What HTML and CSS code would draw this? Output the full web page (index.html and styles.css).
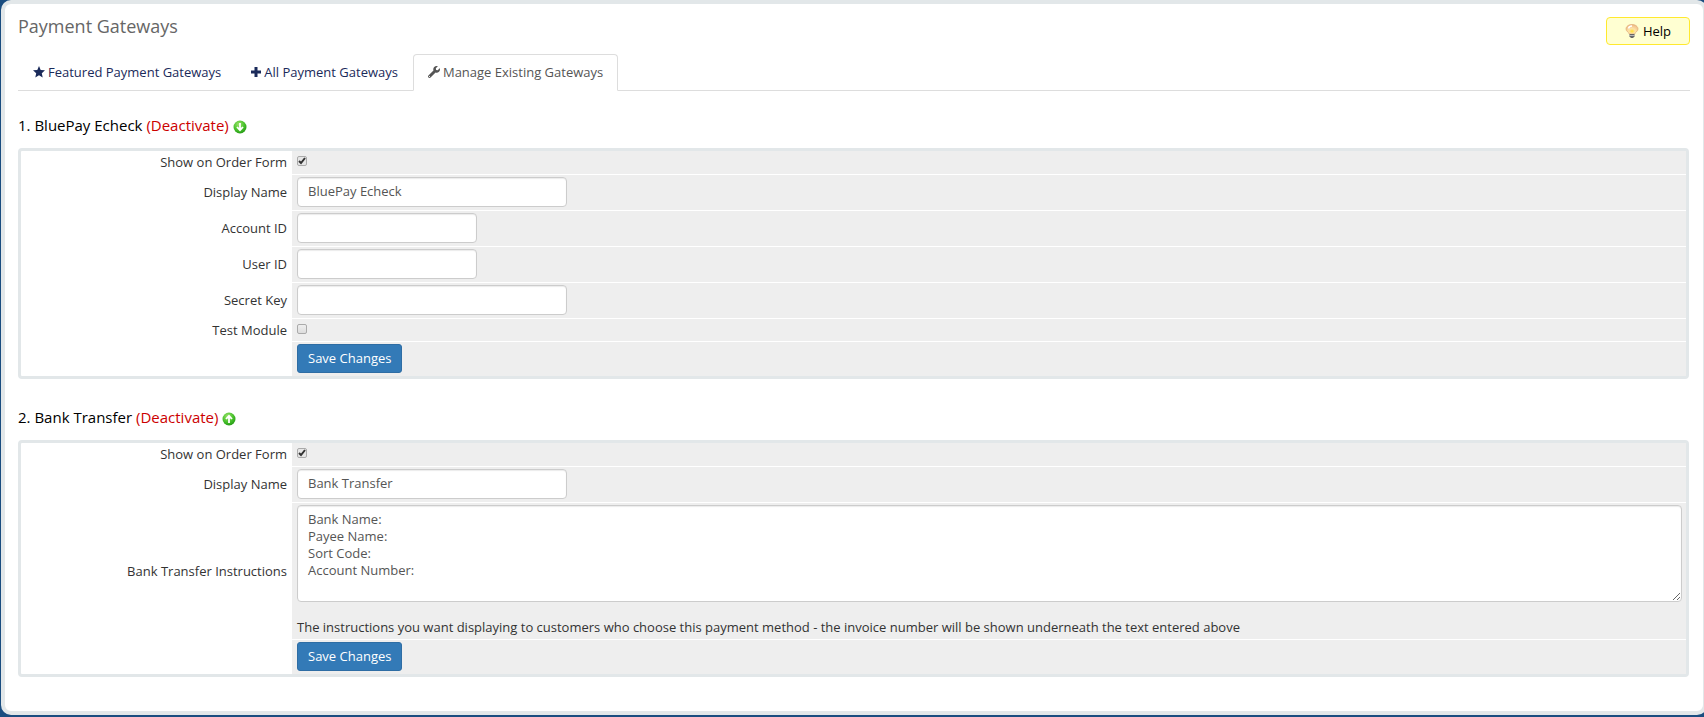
FILE: index.html
```
<!DOCTYPE html>
<html lang="en">
<head>
    <meta charset="UTF-8">
    <meta name="viewport" content="width=device-width, initial-scale=1.0">
    <title>Payment Gateways</title>
    <link rel="stylesheet" href="styles.css">
</head>
<body>
<svg class="defs" width="0" height="0" aria-hidden="true">
    <defs>
        <radialGradient id="green" cx="40%" cy="30%" r="75%">
            <stop offset="0" stop-color="#9be46a"/>
            <stop offset="0.6" stop-color="#45bf2a"/>
            <stop offset="1" stop-color="#219512"/>
        </radialGradient>
        <radialGradient id="glow" cx="50%" cy="70%" r="65%">
            <stop offset="0" stop-color="#ffdf2e"/>
            <stop offset="0.4" stop-color="#fde3a8"/>
            <stop offset="1" stop-color="#f0bc88"/>
        </radialGradient>
    </defs>
</svg>
<main class="panel">
    <div class="header">
        <h1>Payment Gateways</h1>
        <button type="button" class="btn-help">
            <svg width="14" height="14" viewBox="0 0 14 14">
                <path d="M7 .5C3.500 .5 1 2.600 1 5c0 2.500 2.800 3 3.300 5h5.400C10.200 8 13 7.500 13 5c0-2.400-2.500-4.500-6-4.500z" fill="url(#glow)" stroke="#e0ac78" stroke-width=".7"/>
                <path d="M3.500 4.500C3.800 3 5 2 7 2" fill="none" stroke="#fff" stroke-width="1.500"/>
                <path d="M4.500 10h5v2.500l-1.500 1.500H6l-1.500-1.500z" fill="#666"/>
                <path d="M4.500 11.500h5" stroke="#ccc" stroke-width=".8"/>
            </svg>
            Help
        </button>
    </div>

    <nav class="tabs">
        <a href="#featured">
            <svg width="12" height="12" viewBox="0 0 12 12"><path d="M6 0l1.700 3.900 4.300.4-3.200 2.900.9 4.300L6 9.300l-3.700 2.200.9-4.300L0 4.300l4.300-.4z" fill="currentColor"/></svg>
            Featured Payment Gateways
        </a>
        <a href="#all">
            <svg width="10" height="12" viewBox="0 0 10 12"><path d="M3.500 1h3v3.500H10v3H6.500V11h-3V7.500H0v-3h3.500z" fill="currentColor"/></svg>
            All Payment Gateways
        </a>
        <a href="#manage" class="active">
            <svg width="12" height="12" viewBox="0 0 512 512"><path d="M507.700 109.100c-2.200-9-13.500-12.100-20.100-5.500l-74.400 74.400-67.900-11.300L334 98.900l74.400-74.400c6.600-6.600 3.400-17.900-5.700-20.200-47.400-11.700-99.600.9-136.600 37.900-39.600 39.600-50.500 97.100-34 147.200L18.700 402.800c-25 25-25 65.500 0 90.500s65.500 25 90.500 0l213.200-213.200c50.100 16.700 107.500 5.700 147.400-34.200 37.100-37.100 49.700-89.300 37.900-136.800zM64 472a24 24 0 1 1 0-48 24 24 0 0 1 0 48z" fill="currentColor"/></svg>
            Manage Existing Gateways
        </a>
    </nav>

    <section>
        <h2>1. BluePay Echeck <a href="#deactivate-1">(Deactivate)</a>
            <a href="#down" aria-label="Move down"><svg width="14" height="14" viewBox="0 0 14 14"><circle cx="7" cy="7" r="6.500" fill="url(#green)"/><path d="M7 3v7M4 7l3 3.200L10 7" fill="none" stroke="#fff" stroke-width="1.800"/></svg></a>
        </h2>
        <form>
            <table class="form">
                <tr>
                    <th><label for="show1">Show on Order Form</label></th>
                    <td><input type="checkbox" id="show1" checked></td>
                </tr>
                <tr>
                    <th><label for="name1">Display Name</label></th>
                    <td><input type="text" id="name1" value="BluePay Echeck"></td>
                </tr>
                <tr>
                    <th><label for="account">Account ID</label></th>
                    <td><input type="text" id="account" class="short"></td>
                </tr>
                <tr>
                    <th><label for="user">User ID</label></th>
                    <td><input type="text" id="user" class="short"></td>
                </tr>
                <tr>
                    <th><label for="secret">Secret Key</label></th>
                    <td><input type="text" id="secret"></td>
                </tr>
                <tr>
                    <th><label for="test">Test Module</label></th>
                    <td class="low"><input type="checkbox" id="test"></td>
                </tr>
                <tr>
                    <th></th>
                    <td><button type="submit" class="btn-save">Save Changes</button></td>
                </tr>
            </table>
        </form>
    </section>

    <section>
        <h2>2. Bank Transfer <a href="#deactivate-2">(Deactivate)</a>
            <a href="#up" aria-label="Move up"><svg width="14" height="14" viewBox="0 0 14 14"><circle cx="7" cy="7" r="6.500" fill="url(#green)"/><path d="M7 11V4M4 7l3-3.200L10 7" fill="none" stroke="#fff" stroke-width="1.800"/></svg></a>
        </h2>
        <form>
            <table class="form">
                <tr>
                    <th><label for="show2">Show on Order Form</label></th>
                    <td><input type="checkbox" id="show2" checked></td>
                </tr>
                <tr>
                    <th><label for="name2">Display Name</label></th>
                    <td><input type="text" id="name2" value="Bank Transfer"></td>
                </tr>
                <tr>
                    <th><label for="instructions">Bank Transfer Instructions</label></th>
                    <td>
                        <textarea id="instructions" rows="5">Bank Name:
Payee Name:
Sort Code:
Account Number:</textarea>
                        <p>The instructions you want displaying to customers who choose this payment method - the invoice number will be shown underneath the text entered above</p>
                    </td>
                </tr>
                <tr>
                    <th></th>
                    <td><button type="submit" class="btn-save">Save Changes</button></td>
                </tr>
            </table>
        </form>
    </section>
</main>
</body>
</html>
```
FILE: styles.css
```
* {
    box-sizing: border-box;
}
body {
    margin: 0;
    padding: 0 0 2px 1px;
    background: #1a4d80;
    font-family: "Open Sans", sans-serif;
    font-size: 13px;
    line-height: 18px;
    color: #333;
    overflow: hidden;
}
.defs {
    position: absolute;
}
/* right edge runs just past the window */
.panel {
    margin-right: -3px;
    padding: 12px 13px 30px;
    background: #fff;
    border: 4px solid #e2e7e9;
    border-radius: 10px;
}
.header {
    display: flex;
    justify-content: space-between;
    align-items: flex-start;
}
h1 {
    margin: 0;
    font-size: 18px;
    line-height: 20px;
    font-weight: 400;
    color: #666;
}
.btn-help {
    display: flex;
    align-items: center;
    gap: 4px;
    height: 28px;
    margin-top: 1px;
    padding: 0 18px;
    font: inherit;
    color: #000;
    background: #ffffd2;
    border: 1px solid #ffe92e;
    border-radius: 4px;
    cursor: pointer;
}
.tabs {
    display: flex;
    margin-top: 9px;
    border-bottom: 1px solid #ddd;
}
.tabs a {
    display: flex;
    align-items: center;
    gap: 3px;
    height: 37px;
    margin-bottom: -1px;
    padding: 0 14px 2px;
    border: 1px solid transparent;
    border-radius: 4px 4px 0 0;
    color: #1a2a5a;
    text-decoration: none;
}
.tabs .active {
    color: #555;
    background: #fff;
    border-color: #ddd;
    border-bottom-color: #fff;
}
section {
    margin-bottom: 4px;
}
h2 {
    margin: 0;
    padding: 23px 0 12px;
    font-size: 15px;
    line-height: 22px;
    font-weight: 400;
    color: #000;
}
h2 a {
    color: #c00;
    text-decoration: none;
}
h2 svg {
    vertical-align: -3px;
}
.form {
    width: calc(100% - 1px);
    border: 3px solid #e2e7e9;
    border-radius: 4px;
    border-spacing: 0;
}
.form th {
    width: 271px;
    padding: 0 5px 2px;
    font-weight: 400;
    text-align: right;
}
.form td {
    height: 24px;
    padding: 2px 4px 2px 5px;
    background: #eee;
    border-bottom: 1px solid #fff;
}
.form td.low {
    height: 23px;
}
.form tr:last-child td {
    padding-bottom: 3px;
    border-bottom: 0;
}
input[type="text"],
textarea {
    display: block;
    width: 270px;
    height: 30px;
    margin-bottom: 1px;
    padding: 4px 10px 6px;
    font: inherit;
    color: #555;
    background: #fff;
    border: 1px solid #ccc;
    border-radius: 4px;
    box-shadow: inset 0 1px 1px rgba(0, 0, 0, 0.08);
}
input.short {
    width: 180px;
}
textarea {
    width: 100%;
    height: 97px;
    padding-top: 5px;
    line-height: 17px;
    resize: vertical;
}
input[type="checkbox"] {
    appearance: none;
    display: block;
    width: 10px;
    height: 10px;
    margin: 0 0 3px;
    background: linear-gradient(#eee, #ddd);
    border: 1px solid #aaa;
    border-radius: 2px;
}
input[type="checkbox"]:checked {
    background: url("data:image/svg+xml,%3Csvg xmlns='http://www.w3.org/2000/svg' viewBox='0 0 8 8'%3E%3Cpath d='M1 4l2 2 4-5' fill='none' stroke='%23333' stroke-width='2'/%3E%3C/svg%3E") #e6e6e6;
}
.form p {
    margin: 16px 0 1px;
}
.btn-save {
    display: block;
    height: 29px;
    padding: 0 10px 2px;
    font: inherit;
    color: #fff;
    background: #337ab7;
    border: 1px solid #2e6da4;
    border-radius: 3px;
    cursor: pointer;
}
```
